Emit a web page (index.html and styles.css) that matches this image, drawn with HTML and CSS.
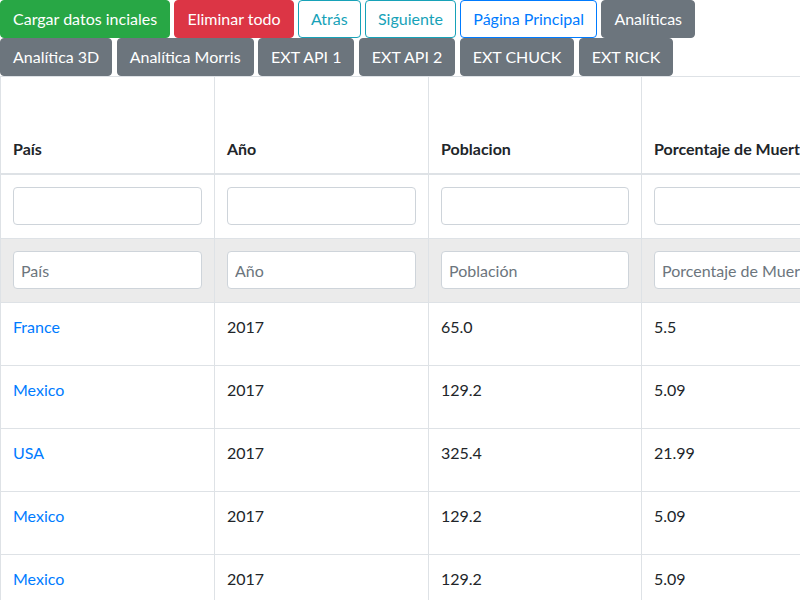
FILE: index.html
```html
<!DOCTYPE html>
<html lang="es">
<head>
<meta charset="utf-8">
<title>Datos</title>
<link rel="stylesheet" href="styles.css">
</head>
<body>
<div class="toolbar">
  <div class="btn-row">
    <button class="btn btn-success">Cargar datos inciales</button>
    <button class="btn btn-danger">Eliminar todo</button>
    <button class="btn btn-outline-info">Atrás</button>
    <button class="btn btn-outline-info">Siguiente</button>
    <button class="btn btn-outline-primary">Página Principal</button>
    <button class="btn btn-secondary">Analíticas</button>
  </div>
  <div class="btn-row">
    <button class="btn btn-secondary">Analítica 3D</button>
    <button class="btn btn-secondary">Analítica Morris</button>
    <button class="btn btn-secondary">EXT API 1</button>
    <button class="btn btn-secondary">EXT API 2</button>
    <button class="btn btn-secondary">EXT CHUCK</button>
    <button class="btn btn-secondary">EXT RICK</button>
  </div>
</div>
<table class="data-table">
  <colgroup>
    <col class="c1"><col class="c2"><col class="c3"><col class="c4"><col class="c5"><col class="c6">
  </colgroup>
  <thead>
    <tr class="head-row">
      <th>País</th>
      <th>Año</th>
      <th>Poblacion</th>
      <th>Porcentaje de Muertes</th>
      <th>Porcentaje de Muertes por Contaminación</th>
      <th>Acciones</th>
    </tr>
  </thead>
  <tbody>
    <tr class="filter-row">
      <td><input class="form-control" type="text"></td>
      <td><input class="form-control" type="text"></td>
      <td><input class="form-control" type="text"></td>
      <td><input class="form-control" type="text"></td>
      <td><input class="form-control" type="text"></td>
      <td></td>
    </tr>
    <tr class="filter-row new-row">
      <td><input class="form-control" type="text" placeholder="País"></td>
      <td><input class="form-control" type="text" placeholder="Año"></td>
      <td><input class="form-control" type="text" placeholder="Población"></td>
      <td><input class="form-control" type="text" placeholder="Porcentaje de Muertes"></td>
      <td><input class="form-control" type="text" placeholder="Contaminación"></td>
      <td></td>
    </tr>
    <tr class="data-row"><td><a href="#">France</a></td><td>2017</td><td>65.0</td><td>5.5</td><td>1.2</td><td></td></tr>
    <tr class="data-row"><td><a href="#">Mexico</a></td><td>2017</td><td>129.2</td><td>5.09</td><td>1.1</td><td></td></tr>
    <tr class="data-row"><td><a href="#">USA</a></td><td>2017</td><td>325.4</td><td>21.99</td><td>0.4</td><td></td></tr>
    <tr class="data-row"><td><a href="#">Mexico</a></td><td>2017</td><td>129.2</td><td>5.09</td><td>1.1</td><td></td></tr>
    <tr class="data-row"><td><a href="#">Mexico</a></td><td>2017</td><td>129.2</td><td>5.09</td><td>1.1</td><td></td></tr>
  </tbody>
</table>
</body>
</html>
```
FILE: styles.css
```css
html, body {
  overflow: hidden;
}
body {
  margin: 0;
  font-family: Lato, "Open Sans", sans-serif;
  font-size: 16px;
  line-height: 1.5;
  color: #212529;
  background: #fff;
}
.toolbar {
  display: flex;
  flex-direction: column;
}
.btn-row {
  display: flex;
  gap: 4.4px;
}
.btn {
  font-family: inherit;
  font-size: 16px;
  line-height: 1.5;
  padding: 6px 12px;
  border: 1px solid transparent;
  border-radius: 4px;
  background: transparent;
  height: 38px;
  white-space: nowrap;
  cursor: pointer;
}
.btn-success { background: #28a745; border-color: #28a745; color: #fff; }
.btn-danger { background: #dc3545; border-color: #dc3545; color: #fff; }
.btn-outline-info { border-color: #17a2b8; color: #17a2b8; background: #fff; }
.btn-outline-primary { border-color: #007bff; color: #007bff; background: #fff; }
.btn-secondary { background: #6c757d; border-color: #6c757d; color: #fff; }

.data-table {
  border-collapse: collapse;
  table-layout: fixed;
  width: 1380px;
  border: 1px solid #dee2e6;
}
.c1, .c2 { width: 214px; }
.c3, .c4 { width: 213px; }
.c5 { width: 213px; }
.c6 { width: 313px; }
.data-table th,
.data-table td {
  border: 1px solid #dee2e6;
  padding: 12px;
  text-align: left;
}
.data-table th {
  vertical-align: bottom;
  border-bottom: 2px solid #dee2e6;
  font-weight: 700;
  height: 72px;
}
.data-table td {
  vertical-align: top;
}
.filter-row td {
  height: 39px;
}
.data-row td {
  height: 38px;
}
.new-row td {
  background: #ebebeb;
}
.data-table a {
  color: #007bff;
  text-decoration: none;
}
.form-control {
  display: block;
  box-sizing: border-box;
  width: 100%;
  height: 38px;
  padding: 6px 7px;
  font-family: inherit;
  font-size: 16px;
  line-height: 1.5;
  color: #495057;
  background: #fff;
  border: 1px solid #ced4da;
  border-radius: 4px;
}
.form-control::placeholder {
  color: #6c757d;
  opacity: 1;
}
```
